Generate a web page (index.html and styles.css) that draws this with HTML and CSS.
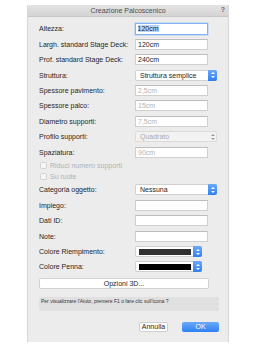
FILE: index.html
```html
<!DOCTYPE html>
<html lang="it">
<head>
  <meta charset="UTF-8">
  <title>Creazione Palcoscenico</title>
  <link rel="stylesheet" href="styles.css">
</head>
<body>
  <div class="dialog">
    <div class="titlebar">
      <span class="title">Creazione Palcoscenico</span>
      <span class="help">?</span>
    </div>

    <div class="form">
      <div class="row">
        <span class="label">Altezza:</span>
        <span class="field focused"><span class="selected">120cm</span></span>
      </div>
      <div class="row">
        <span class="label">Largh. standard Stage Deck:</span>
        <span class="field">120cm</span>
      </div>
      <div class="row">
        <span class="label">Prof. standard Stage Deck:</span>
        <span class="field">240cm</span>
      </div>
      <div class="row">
        <span class="label">Struttura:</span>
        <span class="popup">Struttura semplice<span class="stepper"></span></span>
      </div>
      <div class="row">
        <span class="label">Spessore pavimento:</span>
        <span class="field disabled">2,5cm</span>
      </div>
      <div class="row">
        <span class="label">Spessore palco:</span>
        <span class="field disabled">15cm</span>
      </div>
      <div class="row">
        <span class="label">Diametro supporti:</span>
        <span class="field disabled">7,5cm</span>
      </div>
      <div class="row">
        <span class="label">Profilo supporti:</span>
        <span class="popup disabled">Quadrato<span class="stepper"></span></span>
      </div>
      <div class="row">
        <span class="label">Spaziatura:</span>
        <span class="field disabled">90cm</span>
      </div>
      <div class="row check-row">
        <span class="checkbox"></span>
        <span class="check-label">Riduci numero supporti</span>
      </div>
      <div class="row check-row">
        <span class="checkbox"></span>
        <span class="check-label">Su ruote</span>
      </div>
      <div class="row spaced">
        <span class="label">Categoria oggetto:</span>
        <span class="popup">Nessuna<span class="stepper"></span></span>
      </div>
      <div class="row">
        <span class="label">Impiego:</span>
        <span class="field"></span>
      </div>
      <div class="row">
        <span class="label">Dati ID:</span>
        <span class="field"></span>
      </div>
      <div class="row">
        <span class="label">Note:</span>
        <span class="field"></span>
      </div>
      <div class="row">
        <span class="label">Colore Riempimento:</span>
        <span class="color-popup"><span class="swatch fill"></span><span class="stepper"></span></span>
      </div>
      <div class="row">
        <span class="label">Colore Penna:</span>
        <span class="color-popup"><span class="swatch pen"></span><span class="stepper"></span></span>
      </div>
    </div>

    <button class="wide-button">Opzioni 3D...</button>

    <div class="hint">Per visualizzare l'Aiuto, premere F1 o fare clic sull'icona ?</div>

    <div class="actions">
      <button class="btn">Annulla</button>
      <button class="btn primary">OK</button>
    </div>
  </div>
</body>
</html>
```

FILE: styles.css
```css
body {
  margin: 0;
  background: #fff;
  font-family: "Liberation Sans", Arial, sans-serif;
  font-size: 7px;
  color: #262626;
}
.dialog {
  width: 202px;
  height: 337px;
  margin: 5px 0 0 27px;
  background: #ececec;
  box-sizing: border-box;
  border-left: 1px solid #d6d6d6;
  border-right: 1px solid #d6d6d6;
  padding: 0 0 0 11px;
}
.titlebar {
  height: 12px;
  margin-left: -11px;
  display: flex;
  align-items: center;
  justify-content: center;
  position: relative;
  background: linear-gradient(#e4e4e4, #d3d3d3);
  border-bottom: 1px solid #c6c6c6;
  box-sizing: border-box;
}
.title {
  color: #4d4d4d;
}
.help {
  position: absolute;
  right: 3px;
  top: 1px;
  font-weight: bold;
  color: #666;
}
.form {
  padding-top: 4.3px;
}
.row {
  display: flex;
  align-items: center;
  height: 15.4px;
}
.row.check-row {
  height: 11px;
}
.row.spaced {
  margin-bottom: 0.5px;
}
.label {
  width: 96px;
  flex: none;
  white-space: nowrap;
}
.field {
  width: 73px;
  height: 11px;
  box-sizing: border-box;
  background: #fff;
  border: 1px solid #cfcfcf;
  border-top-color: #bdbdbd;
  padding-left: 2px;
  display: flex;
  align-items: center;
}
.field.focused {
  height: 12px;
  border: 1.5px solid #82b1ef;
  box-shadow: 0 0 0 0.5px #a9c9f3;
  padding-left: 1.5px;
}
.selected {
  background: #b5d5fb;
}
.field.disabled {
  color: #b4b4b4;
}
.popup {
  width: 82px;
  height: 11px;
  box-sizing: border-box;
  background: #fff;
  border: 1px solid #d0d0d0;
  border-radius: 2px;
  padding-left: 4px;
  display: flex;
  align-items: center;
  justify-content: flex-start;
  position: relative;
}
.stepper {
  position: absolute;
  right: -1px;
  top: -1px;
  bottom: -1px;
  width: 9px;
  border-radius: 0 2px 2px 0;
  background: linear-gradient(#6aa9fa, #2f7ff3);
}
.stepper::before,
.stepper::after {
  content: "";
  position: absolute;
  left: 2.5px;
  border-left: 2px solid transparent;
  border-right: 2px solid transparent;
}
.stepper::before {
  top: 2.5px;
  border-bottom: 2px solid #fff;
}
.stepper::after {
  bottom: 2.5px;
  border-top: 2px solid #fff;
}
.popup.disabled {
  background: #f2f2f2;
  color: #ababab;
  border-color: #dadada;
}
.popup.disabled .stepper {
  background: none;
}
.popup.disabled .stepper::before {
  border-bottom-color: #9a9a9a;
}
.popup.disabled .stepper::after {
  border-top-color: #9a9a9a;
}
.checkbox {
  width: 7px;
  height: 7px;
  box-sizing: border-box;
  margin-left: 1px;
  border: 1px solid #d2d2d2;
  border-radius: 1.5px;
  background: #f6f6f6;
}
.check-label {
  margin-left: 3px;
  color: #b2b2b2;
}
.color-popup {
  width: 67px;
  height: 11px;
  box-sizing: border-box;
  background: #fff;
  border: 1px solid #d0d0d0;
  border-radius: 2px;
  position: relative;
  padding: 1.5px 10px 1.5px 3px;
  display: flex;
}
.swatch {
  flex: 1;
}
.swatch.fill {
  background: #303030;
}
.swatch.pen {
  background: #000;
}
.wide-button {
  display: block;
  width: 170px;
  height: 11px;
  margin-top: 3px;
  padding: 0;
  box-sizing: border-box;
  background: #fff;
  border: 1px solid #d2d2d2;
  border-radius: 2px;
  font: inherit;
  color: #262626;
}
.hint {
  width: 180px;
  height: 14px;
  margin-top: 8px;
  box-sizing: border-box;
  background: #e0e0e0;
  border-radius: 2px;
  padding: 1px 2px;
  font-size: 5px;
  line-height: 7px;
  color: #333;
}
.actions {
  display: flex;
  justify-content: flex-end;
  gap: 14px;
  width: 180px;
  margin-top: 11px;
}
.btn {
  height: 10.5px;
  padding: 0;
  box-sizing: border-box;
  background: #fff;
  border: 1px solid #cfcfcf;
  border-radius: 2px;
  font: inherit;
  color: #262626;
  width: 29px;
}
.btn.primary {
  width: 37px;
  border: none;
  background: linear-gradient(#6aaafb, #2f80f4);
  color: #fff;
}
```
